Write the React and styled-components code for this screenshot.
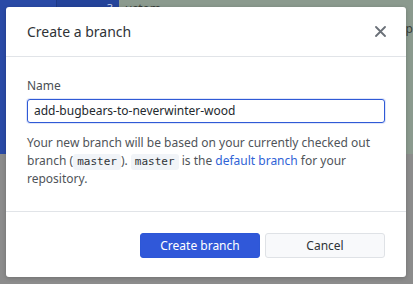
import styled, { createGlobalStyle } from "styled-components";

const GlobalStyle = createGlobalStyle`
  html, body {
    margin: 0;
    padding: 0;
    width: 413px;
    height: 284px;
    overflow: hidden;
  }
  body {
    font-family: "Noto Sans", "Open Sans", sans-serif;
  }
`;

const Screen = styled.div`
  position: relative;
  width: 413px;
  height: 284px;
  display: grid;
  grid-template-columns: 57px 62px 1fr;
  grid-template-rows: 154px 1fr;
  background: #8c8c8c;
`;

const SideBlue = styled.div`
  background: ${(p) => (p.$dark ? "#24439a" : "#2a4aa6")};
  border-right: ${(p) => (p.$dark ? "none" : "1px solid #1f3a86")};
  color: #c9d3f0;
  font-size: 11px;
  text-align: right;
  padding-right: 6px;
`;

const Backdrop = styled.div`
  background: #8b9a8e;
  color: #3a3f3b;
  font-size: 12px;
  padding: 0 0 0 6px;
  display: flex;
  flex-direction: column;
  gap: 3px;
`;

const BackdropLine = styled.span`
  align-self: ${(p) => (p.$end ? "flex-end" : "flex-start")};
`;

const Bottom = styled.div`
  grid-column: 1 / 4;
  background: #8c8c8c;
`;

const Overlay = styled.div`
  position: absolute;
  inset: 0;
  display: flex;
  align-items: flex-start;
  justify-content: flex-start;
  padding: 7px 0 0 6px;
`;

const Dialog = styled.div`
  width: 400px;
  height: 270px;
  box-sizing: border-box;
  background: #ffffff;
  border-radius: 3px;
  box-shadow: 0 1px 4px rgba(0, 0, 0, 0.2);
  display: flex;
  flex-direction: column;
  color: #24292e;
`;

const Header = styled.div`
  height: 50px;
  box-sizing: border-box;
  display: flex;
  align-items: center;
  justify-content: space-between;
  padding: 0 20px 0 21px;
  border-bottom: 1px solid #e1e4e8;
`;

const Title = styled.h1`
  margin: 0;
  font-size: 14px;
  font-weight: 400;
  color: #2f3337;
`;

const CloseButton = styled.button`
  border: none;
  background: none;
  padding: 0;
  width: 12px;
  height: 12px;
  display: flex;
  align-items: center;
  justify-content: center;
  cursor: pointer;
`;

const Body = styled.div`
  flex: 1;
  padding: 21px 21px 0 21px;
  border-bottom: 1px solid #e1e4e8;
`;

const Label = styled.label`
  display: block;
  font-size: 12px;
  color: #4a4f54;
  line-height: 16px;
  margin-bottom: 4px;
`;

const Input = styled.input`
  width: 358px;
  height: 24px;
  box-sizing: border-box;
  border: 1px solid #2f5ad6;
  border-radius: 3px;
  box-shadow: 0 0 0 1px rgba(47, 90, 214, 0.15);
  padding: 0 6px;
  font-family: "Noto Sans", "Open Sans", sans-serif;
  font-size: 12px;
  color: #24292e;
  outline: none;
`;

const Help = styled.p`
  margin: 11px 0 0 0;
  font-size: 12px;
  line-height: 18px;
  color: #4f5459;
`;

const Code = styled.code`
  display: inline-block;
  font-family: "DejaVu Sans Mono", "Liberation Mono", monospace;
  font-size: 11px;
  line-height: 16px;
  background: #f1f4f8;
  border-radius: 3px;
  padding: 0 4px;
  color: #2f3337;
`;

const Link = styled.a`
  color: #2f63d6;
  text-decoration: none;
`;

const Footer = styled.div`
  height: 65px;
  box-sizing: border-box;
  display: flex;
  justify-content: flex-end;
  align-items: flex-start;
  gap: 5px;
  padding: 21px 21px 0 0;
`;

const Button = styled.button`
  width: 120px;
  height: 25px;
  box-sizing: border-box;
  border-radius: 3px;
  font-family: "Noto Sans", "Open Sans", sans-serif;
  font-size: 12px;
  cursor: pointer;
  border: 1px solid ${(p) => (p.$primary ? "#2d57d6" : "#dfe2e6")};
  background: ${(p) => (p.$primary ? "#3058d9" : "#f8f9fb")};
  color: ${(p) => (p.$primary ? "#ffffff" : "#2f3337")};
`;

export default function App() {
  return (
    <>
      <GlobalStyle />
      <Screen>
        <SideBlue />
        <SideBlue $dark>3</SideBlue>
        <Backdrop>
          <BackdropLine>ustom</BackdropLine>
          <BackdropLine $end>op</BackdropLine>
        </Backdrop>
        <Bottom />
        <Overlay>
          <Dialog>
            <Header>
              <Title>Create a branch</Title>
              <CloseButton aria-label="Close">
                <svg width="11" height="11" viewBox="0 0 11 11">
                  <path d="M1 1L10 10M10 1L1 10" stroke="#6a7078" strokeWidth="1.8" strokeLinecap="round" />
                </svg>
              </CloseButton>
            </Header>
            <Body>
              <Label>Name</Label>
              <Input defaultValue="add-bugbears-to-neverwinter-wood" />
              <Help>
                Your new branch will be based on your currently checked out branch (<Code>master</Code>). <Code>master</Code> is the <Link href="#">default branch</Link> for your repository.
              </Help>
            </Body>
            <Footer>
              <Button $primary>Create branch</Button>
              <Button>Cancel</Button>
            </Footer>
          </Dialog>
        </Overlay>
      </Screen>
    </>
  );
}
